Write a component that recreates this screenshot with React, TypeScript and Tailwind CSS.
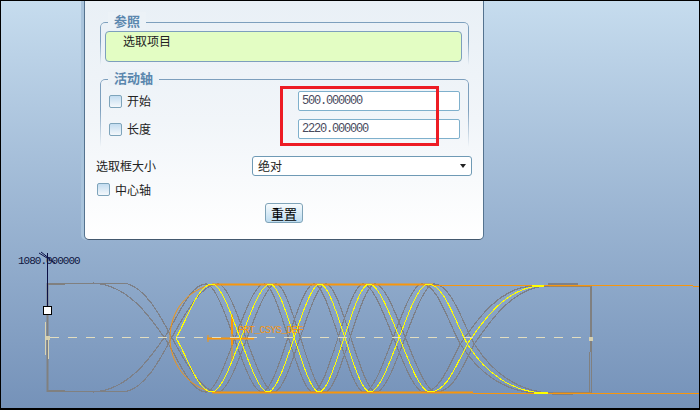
const cjk = { fontFamily: '"Noto Sans CJK SC", "Liberation Sans", sans-serif' };

function Checkbox() {
  return <span className="block h-[13px] w-[13px] shrink-0 rounded-[2px] border border-[#7ea4bb] bg-gradient-to-b from-[#c3dcf0] to-[#f4f8fb]" />;
}

function Group({ title, children }: { title: string; children: React.ReactNode }) {
  return (
    <div className="relative ml-[15px] mr-[14px]">
      {/* side lines fade out going down */}
      <div className="absolute inset-0 rounded-t-[5px] border border-b-0 border-[#7d9fbd] [mask-image:linear-gradient(to_bottom,black_45%,transparent)]" />
      <div className="relative ml-[8px] -mt-[1px] h-[1px] w-fit">
        <span className="relative -top-[9px] block bg-[#ecf2f7] px-[6px] text-[13px] leading-[17px] font-bold text-[#5b87ae]">{title}</span>
      </div>
      {children}
    </div>
  );
}

function NumberRow({ label, value }: { label: string; value: string }) {
  return (
    <div className="flex h-[28px] items-center pl-[9px] pr-[9px]">
      <Checkbox />
      <span className="ml-[5px] text-[12px] text-[#222]">{label}</span>
      <div className="ml-auto flex h-[20px] w-[162px] items-center rounded-[2px] border border-[#7fb0cc] bg-white pl-[3px] text-[12px] tracking-[-1.2px] text-[#4a4a5e]" style={{ fontFamily: '"Liberation Mono", monospace' }}>
        {value}
      </div>
    </div>
  );
}

function Panel() {
  return (
    <div className="ml-[83px] flex h-[239px] w-[400px] flex-col rounded-b-[5px] border-x border-b border-x-[#55738f] border-b-[#44596e] bg-gradient-to-b from-[#e9f0f6] via-[#f1f5f9] to-white pt-[21px] shadow-[-3px_0_0_#a9c4dc]" style={cjk}>
      <Group title="参照">
        <div className="pl-[5px] pr-[7px] pt-[9px] pb-[3px]">
          <div className="h-[31px] rounded-[4px] border border-[#7d9fbd] bg-[#e3fdc3] pl-[17px] text-[12px] leading-[17px] text-[#222]">选取项目</div>
        </div>
      </Group>
      <div className="h-[14px]" />
      <Group title="活动轴">
        <div className="pt-[8px] pb-[4px]">
          <NumberRow label="开始" value="500.000000" />
          <NumberRow label="长度" value="2220.000000" />
        </div>
      </Group>
      <div className="mt-[9px] flex h-[20px] items-center pl-[11px] pr-[11px]">
        <span className="text-[12px] text-[#222]">选取框大小</span>
        <div className="ml-auto flex h-[20px] w-[220px] items-center justify-between rounded-[3px] border border-[#6f9ab5] bg-white pl-[5px] pr-[5px] text-[12px] text-[#222]">
          绝对
          <span className="h-0 w-0 border-x-[3px] border-t-[4px] border-x-transparent border-t-[#222]" />
        </div>
      </div>
      <div className="mt-[7px] flex h-[13px] items-center pl-[12px]">
        <Checkbox />
        <span className="ml-[5px] text-[12px] text-[#222]">中心轴</span>
      </div>
      <div className="mt-[7px] flex justify-center">
        <button className="h-[20px] w-[38px] rounded-[3px] border border-[#7fa3b8] bg-gradient-to-b from-[#f7fbfd] to-[#bddcf0] text-[13px] leading-[17px] text-black">重置</button>
      </div>
    </div>
  );
}

type P = [number, number];

// sine-like run through peaks, fairly pointed at the tips; leading M is dropped so runs can be chained
function wave(pts: P[], dx = 0) {
  let d = "";
  for (let i = 1; i < pts.length; i++) {
    const [x0, y0] = pts[i - 1];
    const [x1, y1] = pts[i];
    const k = (x1 - x0) * 0.3;
    d += ` C${x0 + dx + k} ${y0} ${x1 + dx - k} ${y1} ${x1 + dx} ${y1}`;
  }
  return d;
}

const T = 284;
const B = 392;
const strandA: P[] = [[212, T], [268, B], [320, T], [370, B], [428, T]];
const strandB: P[] = [[212, B], [270, T], [319, B], [369, T], [430, B]];

// last stretch is lopsided: crossing sits at x=468, far end flattens out near 545
const tailA = (dx = 0) => ` C${445 + dx} 284 ${456 + dx} 325 ${468 + dx} 345 C${485 + dx} 372 ${512 + dx} 393 ${546 + dx} 393`;
const tailB = (dx = 0) => ` C${447 + dx} 392 ${456 + dx} 365 ${468 + dx} 343 C${485 + dx} 318 ${508 + dx} 286 ${542 + dx} 286`;

function Helix() {
  return (
    <svg viewBox="1 240 698 168" className="block h-[168px] w-[698px]">
      {/* frame */}
      <g stroke="#808080" fill="none">
        <path d="M47.5 283 V392" strokeWidth="2" />
        <path d="M47 283.5 H125 M47 391.5 H125" strokeWidth="1" />
        <path d="M47 391 H65 M47 284 H65" strokeWidth="2" />
        <path d="M591 286 V352" strokeWidth="2" />
        <path d="M589.5 352 V393 M591.5 352 V393" strokeWidth="1" />
        <path d="M540 286.5 H591 M540 392.5 H591" stroke="#a08560" strokeWidth="1.2" />
      </g>

      {/* grey strands, two per yellow one; the left ends run out of the flat rims */}
      <g stroke="#7d8088" fill="none" strokeWidth="1.2" shapeRendering="crispEdges">
        <path d={"M93 283 C130 285 152 320 166 340 C178 358 190 392 206 392" + wave(strandB, -6) + tailB(-7)} />
        <path d={"M125 283 C145 287 160 315 172 338 C183 357 200 392 218 392" + wave(strandB, 6) + tailB(7)} />
        <path d={"M93 392 C130 390 152 355 166 335 C178 317 190 284 206 284" + wave(strandA, -6) + tailA(-7)} />
        <path d={"M125 392 C145 388 160 360 172 337 C183 318 200 284 218 284" + wave(strandA, 6) + tailA(7)} />
        <path d="M548 284 H578 M552 394 H573" />
      </g>

      {/* orange construction lines */}
      <g stroke="#f7960d" fill="none">
        <path d="M212 284.5 H433" strokeWidth="2" />
        <path d="M433 285.5 H693 M693 286.5 H700" strokeWidth="1" />
        <path d="M212 392.5 H473" strokeWidth="2" />
        <path d="M473 393.5 H700" strokeWidth="1" />
        <path d="M214 284 C186 290 170 312 170 338 C170 362 186 384 208 391" strokeWidth="1" />
        <path d="M207 338.5 H254" strokeWidth="2" />
        <path d="M208 335 V342 M232 314 V361" strokeWidth="1" />
        <path d="M232 315 V334 M232 340 V345" strokeWidth="2" />
      </g>

      {/* yellow strands */}
      <g stroke="#ffff00" fill="none" strokeWidth="1" shapeRendering="crispEdges">
        <path d={"M176 338 C188 318 198 284 212 284" + wave(strandA) + tailA()} />
        <path d={"M176 338 C188 358 198 392 212 392" + wave(strandB) + tailB()} />
        <path d="M532 286 H544 M534 393 H548" strokeWidth="2" />
      </g>

      {/* axis */}
      <path d="M50 337.5 H591" stroke="#e2ddbf" strokeWidth="1" strokeDasharray="9 9" />
      <path d="M45.5 322 V355 M48.5 340 V359" stroke="#d9d4b4" strokeWidth="1" />
      <rect x="46" y="336" width="4" height="4" fill="#d6d0b0" />
      <rect x="589" y="337" width="4" height="4" fill="#d6d0b0" />

      <text x="238" y="333" fill="#f7960d" fontSize="10" letterSpacing="-0.6" fontFamily='"Liberation Mono", monospace'>PRT_CSYS_DEF</text>

      {/* dimension handle */}
      <text x="18" y="264" fill="#10163f" fontSize="11" letterSpacing="-1" fontFamily='"Liberation Mono", monospace'>1080.000000</text>
      <path d="M47.5 253 V307 M39 253 L55 263 M41 252 L50 259" stroke="#0a0f45" strokeWidth="1" fill="none" />
      <rect x="43.5" y="306.5" width="8" height="8" fill="#fff" stroke="#000" />
    </svg>
  );
}

export default function App() {
  return (
    <div className="relative h-[410px] w-[700px] overflow-hidden border-t border-r border-b-2 border-l border-black bg-gradient-to-b from-[#c6dcee] to-[#7592b9]">
      <Panel />
      <Helix />
      {/* red annotation box */}
      <div className="absolute top-[85px] left-[279px] h-[60px] w-[159px] border-[3px] border-[#ed1c24]" />
    </div>
  );
}
